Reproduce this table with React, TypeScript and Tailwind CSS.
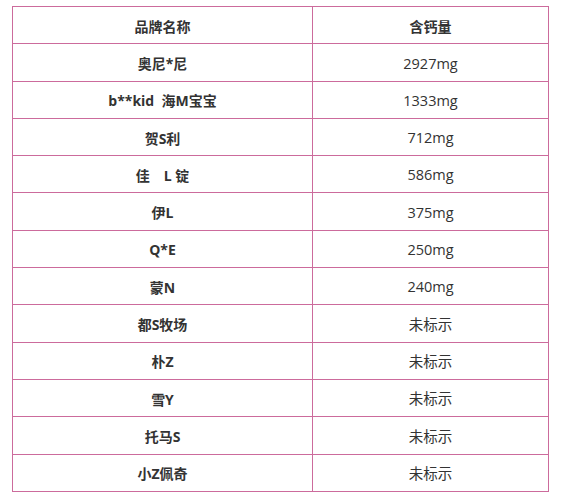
const rows: [string, string][] = [
  ["奥尼*尼", "2927mg"],
  ["b**kid  海M宝宝", "1333mg"],
  ["贺S利", "712mg"],
  ["佳　L 锭", "586mg"],
  ["伊L", "375mg"],
  ["Q*E", "250mg"],
  ["蒙N", "240mg"],
  ["都S牧场", "未标示"],
  ["朴Z", "未标示"],
  ["雪Y", "未标示"],
  ["托马S", "未标示"],
  ["小Z佩奇", "未标示"],
];

export default function App() {
  return (
    <div
      className="w-[577px] h-[501px] bg-white pt-[6px] pl-[12px] text-[14px] text-[#333]"
      style={{ fontFamily: '"Open Sans", "Noto Sans CJK SC", sans-serif' }}
    >
      <div className="w-[537px] border-t border-l border-[#cc6b9c]">
        {/* header */}
        <div className="flex">
          <div className="w-[300px] h-[37.3px] border-r border-b border-[#cc6b9c] flex items-center justify-center pt-[2px] font-bold">
            品牌名称
          </div>
          <div className="w-[236px] h-[37.3px] border-r border-b border-[#cc6b9c] flex items-center justify-center pt-[2px] font-bold">
            含钙量
          </div>
        </div>
        {rows.map(([name, amount]) => (
          <div key={name} className="flex">
            <div className="w-[300px] h-[37.3px] border-r border-b border-[#cc6b9c] flex items-center justify-center pt-[2px] font-bold whitespace-pre">
              {name}
            </div>
            <div className="w-[236px] h-[37.3px] border-r border-b border-[#cc6b9c] flex items-center justify-center pt-[2px] text-[14.5px]">
              {amount}
            </div>
          </div>
        ))}
      </div>
    </div>
  );
}
